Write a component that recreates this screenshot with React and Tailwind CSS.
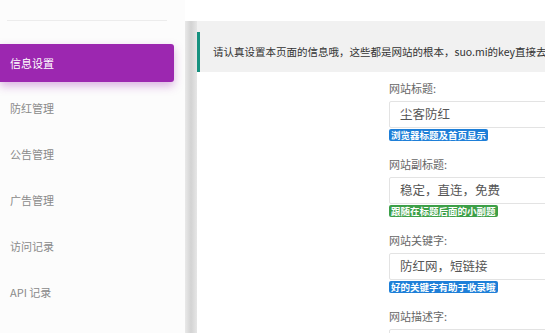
import React from 'react';

const menu = ['防红管理', '公告管理', '广告管理', '访问记录', 'API 记录', '系统设置'];

const fields = [
  { label: '网站标题:', value: '尘客防红', tip: '浏览器标题及首页显示', color: 'bg-[#1e7fd8]' },
  { label: '网站副标题:', value: '稳定，直连，免费', tip: '跟随在标题后面的小副题', color: 'bg-[#3d9f48]' },
  { label: '网站关键字:', value: '防红网，短链接', tip: '好的关键字有助于收录哦', color: 'bg-[#1e7fd8]' },
  { label: '网站描述字:', value: '', tip: '', color: '' },
];

const App = () => {
  return (
    <div
      className="w-[545px] h-[333px] overflow-hidden flex bg-white"
      style={{ fontFamily: '"Noto Sans CJK SC", "Noto Sans", sans-serif' }}
    >
      {/* sidebar */}
      <div className="w-[185px] shrink-0 bg-[#fcfcfc] pt-[20px]">
        <div className="ml-[7px] w-[160px] h-px bg-[#ececec]" />
        <div className="mt-[23px] w-[174px] h-[38px] bg-[#9c27b0] rounded-r-[3px] shadow-[0_4px_10px_rgba(156,39,176,0.35)] flex items-center pl-[10px] text-[11px] text-white">
          信息设置
        </div>
        <div className="mt-[3px]">
          {menu.map((m) => (
            <div key={m} className="h-[46px] flex items-center pl-[10px] text-[11px] text-[#8a8a8a]">
              {m}
            </div>
          ))}
        </div>
      </div>

      {/* content */}
      <div className="flex-1 flex flex-col pt-[21px] min-w-0">
        <div className="flex flex-1 min-h-0">
          <div className="w-[12px] shrink-0 bg-linear-to-r from-[#e9e9e9] via-[#d3d3d3] to-[#e6e6e6]" />
          <div className="flex-1 min-w-0 bg-white overflow-hidden">
            <div className="bg-[#f1f1f1] pt-[11px]">
              <div className="h-[40px] border-l-[3px] border-[#16917f] bg-[#f1f1f1] flex items-center pl-[13px] text-[10.5px] text-[#333] whitespace-nowrap">
                请认真设置本页面的信息哦，这些都是网站的根本，suo.mi的key直接去官网申请即可
              </div>
            </div>
            <div className="pl-[192px] pt-[7px]">
              {fields.map((f) => (
                <div key={f.label} className="w-[300px] mb-[14px]">
                  <div className="h-[18px] flex items-center text-[11px] text-[#666]">{f.label}</div>
                  <div className="mt-[4px] h-[27px] border border-[#e3e3e3] rounded-[2px] flex items-center pl-[10px] text-[12.5px] text-[#555]">
                    {f.value}
                  </div>
                  {f.tip && (
                    <div className="mt-[1px] h-[12px] flex">
                      <span className={`${f.color} text-white text-[9.5px] font-bold leading-[12px] px-[2px] rounded-[2px] whitespace-nowrap`}>
                        {f.tip}
                      </span>
                    </div>
                  )}
                </div>
              ))}
            </div>
          </div>
        </div>
      </div>
    </div>
  );
};

export default App;
